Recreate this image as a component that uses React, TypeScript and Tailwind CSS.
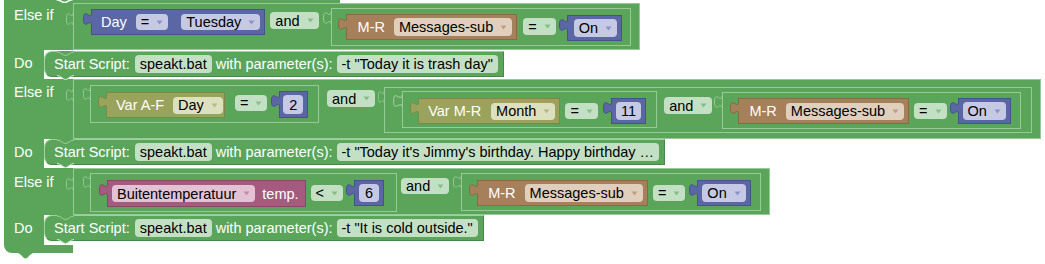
import clsx from 'clsx';
import type { ReactNode } from 'react';

type Tone = 'blue' | 'brown' | 'olive' | 'pink';

const LINE = '#98c998';
const GREEN = '#5ba55b';
const GREEN_FIELD = 'bg-[#c4e0c4]';
const GREEN_ARROW = '#86bd86';

const tones: Record<Tone, { fill: string; edge: string; body: string; field: string; arrow: string }> = {
  blue: { fill: '#5b67a5', edge: '#47518f', body: 'bg-[#5b67a5] border-[#47518f]', field: 'bg-[#c5c9e4]', arrow: '#8b93c9' },
  brown: { fill: '#a5805b', edge: '#896946', body: 'bg-[#a5805b] border-[#896946]', field: 'bg-[#e1cfbd]', arrow: '#bf9f82' },
  olive: { fill: '#9aa35c', edge: '#7f8747', body: 'bg-[#9aa35c] border-[#7f8747]', field: 'bg-[#dde0be]', arrow: '#b4ba84' },
  pink: { fill: '#a55b80', edge: '#894666', body: 'bg-[#a55b80] border-[#894666]', field: 'bg-[#e3c3d3]', arrow: '#c58ba8' },
};

function Arrow({ color }: { color: string }) {
  return (
    <svg width="7" height="5" viewBox="0 0 7 5" className="ml-[7px] shrink-0">
      <path d="M0.5 0.5H6.5L3.5 4.5Z" fill={color} />
    </svg>
  );
}

function Field({
  text,
  bg,
  arrow,
  pad = 'px-[5px]',
  className,
}: {
  text: string;
  bg: string;
  arrow?: string;
  pad?: string;
  className?: string;
}) {
  return (
    <span className={clsx('flex shrink-0 items-center whitespace-pre rounded-[4px] text-black', pad, bg, className)}>
      {text}
      {arrow && <Arrow color={arrow} />}
    </span>
  );
}

function Value({ tone, className, children }: { tone: Tone; className?: string; children: ReactNode }) {
  const t = tones[tone];
  return (
    <div className={clsx('flex shrink-0', className)}>
      <svg width="9" height="20" viewBox="0 0 9 20" className="relative z-10 -mr-px shrink-0">
        <path d="M9 4C9 12 0.5 -2.4 0.5 10C0.5 22.4 9 8 9 16Z" fill={t.fill} />
        <path d="M8.5 4C8.5 12 0.5 -2.4 0.5 10C0.5 22.4 8.5 8 8.5 16" fill="none" stroke={t.edge} />
      </svg>
      <div className={clsx('flex items-center border text-white', t.body)}>{children}</div>
    </div>
  );
}

function Notch({ className }: { className?: string }) {
  return (
    <svg height="20" viewBox="0 0 8 20" preserveAspectRatio="none" className={clsx('shrink-0', className)}>
      <path d="M8 4C8 12 0.5 -2.4 0.5 10C0.5 22.4 8 8 8 16" fill="none" stroke={LINE} />
    </svg>
  );
}

function GreenField({ text, className }: { text: string; className?: string }) {
  return <Field text={text} bg={GREEN_FIELD} arrow={GREEN_ARROW} className={className} />;
}

function ElseIfLabel({ pt }: { pt: string }) {
  return (
    <div className="flex w-[69px] shrink-0 justify-between pl-[10px]">
      <span className={clsx('text-white', pt)}>Else if</span>
      <Notch className="mt-[6px] w-[7px]" />
    </div>
  );
}

function Statement({ param, className }: { param: string; className?: string }) {
  return (
    <div
      className={clsx(
        'relative flex items-center rounded-l-[8px] border border-t-[#a2d0a2] border-l-[#a2d0a2] border-r-[#478747] border-b-[#478747] bg-[#5ba55b] pl-[9px] pr-[5px] text-white',
        className,
      )}
    >
      <span>Start Script:</span>
      <Field text="speakt.bat" bg={GREEN_FIELD} className="ml-[5px] h-[18px]" />
      <span className="ml-[4px]">with parameter(s):</span>
      <Field text={param} bg={GREEN_FIELD} className="ml-[4px] h-[18px]" />
      <svg width="17" height="6" viewBox="0 0 17 6" className="absolute left-[12px] top-[-1px]">
        <path d="M0 0H17V1C13 1 11.5 4.5 8.5 4.5C5.5 4.5 4 1 0 1Z" fill={GREEN} />
        <path d="M0 1C4 1 5.5 4.5 8.5 4.5C11.5 4.5 13 1 17 1" fill="none" stroke="#a2d0a2" />
      </svg>
      <svg width="17" height="6" viewBox="0 0 17 6" className="absolute bottom-[-5px] left-[12px]">
        <path d="M0 0C4 0 5.5 4.5 8.5 4.5C11.5 4.5 13 0 17 0Z" fill={GREEN} />
        <path d="M0 0.5C4 0.5 5.5 4.5 8.5 4.5C11.5 4.5 13 0.5 17 0.5" fill="none" stroke="#d9ecd9" />
      </svg>
    </div>
  );
}

function DoRow({ h, block, param }: { h: string; block: string; param: string }) {
  return (
    <div className={clsx('flex', h)}>
      <div className="w-[40px] shrink-0 bg-[#5ba55b] pl-[10px] pt-[5px] text-white">Do</div>
      <div>
        <Statement param={param} className={block} />
      </div>
    </div>
  );
}

export default function App() {
  const blue = tones.blue;
  const brown = tones.brown;
  const olive = tones.olive;
  const pink = tones.pink;

  return (
    <div className="relative h-[264px] w-[1045px] overflow-hidden bg-white font-['Liberation_Sans',Arial,sans-serif] text-[14.5px] leading-[16px]">
      <div className="flex flex-col pl-[4px]">
        <div className="relative h-[3px] w-[336px] bg-[#5ba55b]">
          <svg width="17" height="4" viewBox="0 0 17 4" className="absolute left-[52px] top-[-1px]">
            <path d="M0 0.5C4 0.5 5.5 3.5 8.5 3.5C11.5 3.5 13 0.5 17 0.5" fill="none" stroke="#ffffff" strokeWidth="1.5" />
          </svg>
        </div>

        {/* Else if: Day = Tuesday and M-R Messages-sub = On */}
        <div className="flex h-[47px] w-[636px] bg-[#5ba55b]">
          <ElseIfLabel pt="pt-[4px]" />
          <div className="flex h-[47px] w-[567px] items-start border border-[#98c998] pl-[9px]">
            <Value tone="blue" className="mt-[5px] h-[26px]">
              <span className="pl-[9px]">Day</span>
              <Field text="=" bg={blue.field} arrow={blue.arrow} className="ml-[9px] h-[16px]" />
              <Field text="Tuesday" bg={blue.field} arrow={blue.arrow} className="ml-[13px] mr-[4px] h-[16px]" />
            </Value>
            <GreenField text="and" className="ml-[5px] mt-[8px] h-[17px]" />
            <Notch className="ml-[4px] mt-[4px] w-[8px]" />
            <div className="mt-[4px] flex h-[38px] w-[300px] items-start border border-[#98c998] pl-[6px]">
              <Value tone="brown" className="mt-[5px] h-[26px]">
                <span className="pl-[11px]">M-R</span>
                <Field text="Messages-sub" bg={brown.field} arrow={brown.arrow} className="ml-[9px] mr-[4px] h-[18px]" />
              </Value>
              <GreenField text="=" className="ml-[6px] mt-[9px] h-[17px]" />
              <Value tone="blue" className="ml-[3px] mt-[6px] h-[26px]">
                <Field text="On" bg={blue.field} arrow={blue.arrow} className="ml-[6px] mr-[4px] h-[18px]" />
              </Value>
            </div>
          </div>
        </div>

        <DoRow h="h-[29px]" block="mt-[1px] h-[26px]" param={'-t "Today it is trash day"'} />

        {/* Else if: Var A-F Day = 2 and (Var M-R Month = 11 and M-R Messages-sub = On) */}
        <div className="flex h-[60px] w-[1037px] bg-[#5ba55b]">
          <ElseIfLabel pt="pt-[5px]" />
          <div className="flex h-[60px] w-[968px] items-start border border-[#98c998] pl-[9px]">
            <Notch className="mt-[4px] w-[7px]" />
            <div className="mt-[5px] flex h-[38px] w-[229px] items-start border border-[#98c998] pl-[7px]">
              <Value tone="olive" className="mt-[6px] h-[26px]">
                <span className="pl-[9px]">Var A-F</span>
                <Field text="Day" bg={olive.field} arrow={olive.arrow} className="ml-[9px] mr-[1px] h-[17px]" />
              </Value>
              <GreenField text="=" className="ml-[10px] mt-[9px] h-[16px]" />
              <Value tone="blue" className="ml-[4px] mt-[5px] h-[27px]">
                <Field text="2" bg={blue.field} pad="px-[6px]" className="ml-[3px] mr-[4px] h-[19px]" />
              </Value>
            </div>
            <GreenField text="and" className="ml-[8px] mt-[10px] h-[17px]" />
            <Notch className="ml-[3px] mt-[7px] w-[6px]" />
            <div className="mt-[7px] flex h-[46px] w-[648px] items-start border border-[#98c998] pl-[8px]">
              <Notch className="mt-[3px] w-[9px]" />
              <div className="mt-[3px] flex h-[37px] w-[255px] items-start border border-[#98c998] pl-[7px]">
                <Value tone="olive" className="mt-[6px] h-[26px]">
                  <span className="pl-[9px]">Var M-R</span>
                  <Field text="Month" bg={olive.field} arrow={olive.arrow} className="ml-[10px] mr-[4px] h-[17px]" />
                </Value>
                <GreenField text="=" className="ml-[5px] mt-[11px] h-[16px]" />
                <Value tone="blue" className="ml-[5px] mt-[6px] h-[26px]">
                  <Field text="11" bg={blue.field} className="ml-[4px] mr-[4px] h-[18px]" />
                </Value>
              </div>
              <GreenField text="and" className="ml-[7px] mt-[9px] h-[17px]" />
              <Notch className="ml-[2px] mt-[4px] w-[8px]" />
              <div className="mt-[4px] flex h-[37px] w-[299px] items-start border border-[#98c998] pl-[7px]">
                <Value tone="brown" className="mt-[5px] h-[26px]">
                  <span className="pl-[10px]">M-R</span>
                  <Field text="Messages-sub" bg={brown.field} arrow={brown.arrow} className="ml-[9px] mr-[4px] h-[17px]" />
                </Value>
                <GreenField text="=" className="ml-[5px] mt-[10px] h-[16px]" />
                <Value tone="blue" className="ml-[3px] mt-[5px] h-[26px]">
                  <Field text="On" bg={blue.field} arrow={blue.arrow} className="ml-[4px] mr-[4px] h-[18px]" />
                </Value>
              </div>
            </div>
          </div>
        </div>

        <DoRow h="h-[29px]" block="h-[26px]" param={'-t "Today it\'s Jimmy\'s birthday. Happy birthday …'} />

        {/* Else if: Buitentemperatuur temp. < 6 and M-R Messages-sub = On */}
        <div className="flex h-[47px] w-[766px] bg-[#5ba55b]">
          <ElseIfLabel pt="pt-[6px]" />
          <div className="flex h-[47px] w-[697px] items-start border border-[#98c998] pl-[9px]">
            <Notch className="mt-[3px] w-[7px]" />
            <div className="mt-[4px] flex h-[39px] w-[307px] items-start border border-[#98c998] pl-[8px]">
              <Value tone="pink" className="mt-[6px] h-[27px]">
                <Field text="Buitentemperatuur" bg={pink.field} arrow={pink.arrow} className="ml-[4px] h-[17px]" />
                <span className="ml-[7px] mr-[6px]">temp.</span>
              </Value>
              <GreenField text="<" className="ml-[5px] mt-[11px] h-[16px]" />
              <Value tone="blue" className="ml-[3px] mt-[6px] h-[26px]">
                <Field text="6" bg={blue.field} pad="px-[6px]" className="ml-[4px] mr-[4px] h-[18px]" />
              </Value>
            </div>
            <GreenField text="and" className="ml-[4px] mt-[9px] h-[16px]" />
            <Notch className="ml-[4px] mt-[3px] w-[8px]" />
            <div className="mt-[4px] flex h-[38px] w-[300px] items-start border border-[#98c998] pl-[7px]">
              <Value tone="brown" className="mt-[6px] h-[26px]">
                <span className="pl-[10px]">M-R</span>
                <Field text="Messages-sub" bg={brown.field} arrow={brown.arrow} className="ml-[9px] mr-[4px] h-[18px]" />
              </Value>
              <GreenField text="=" className="ml-[5px] mt-[11px] h-[16px]" />
              <Value tone="blue" className="ml-[4px] mt-[6px] h-[26px]">
                <Field text="On" bg={blue.field} arrow={blue.arrow} className="ml-[4px] mr-[4px] h-[18px]" />
              </Value>
            </div>
          </div>
        </div>

        <DoRow h="h-[30px]" block="h-[26px]" param={'-t "It is cold outside."'} />

        <div className="h-[8px] w-[69px] rounded-bl-[8px] bg-[#5ba55b]" />
        <svg width="17" height="6" viewBox="0 0 17 6" className="ml-[13px]">
          <path d="M0 0C4 0 5.5 5.5 8.5 5.5C11.5 5.5 13 0 17 0Z" fill={GREEN} />
        </svg>
      </div>
    </div>
  );
}
